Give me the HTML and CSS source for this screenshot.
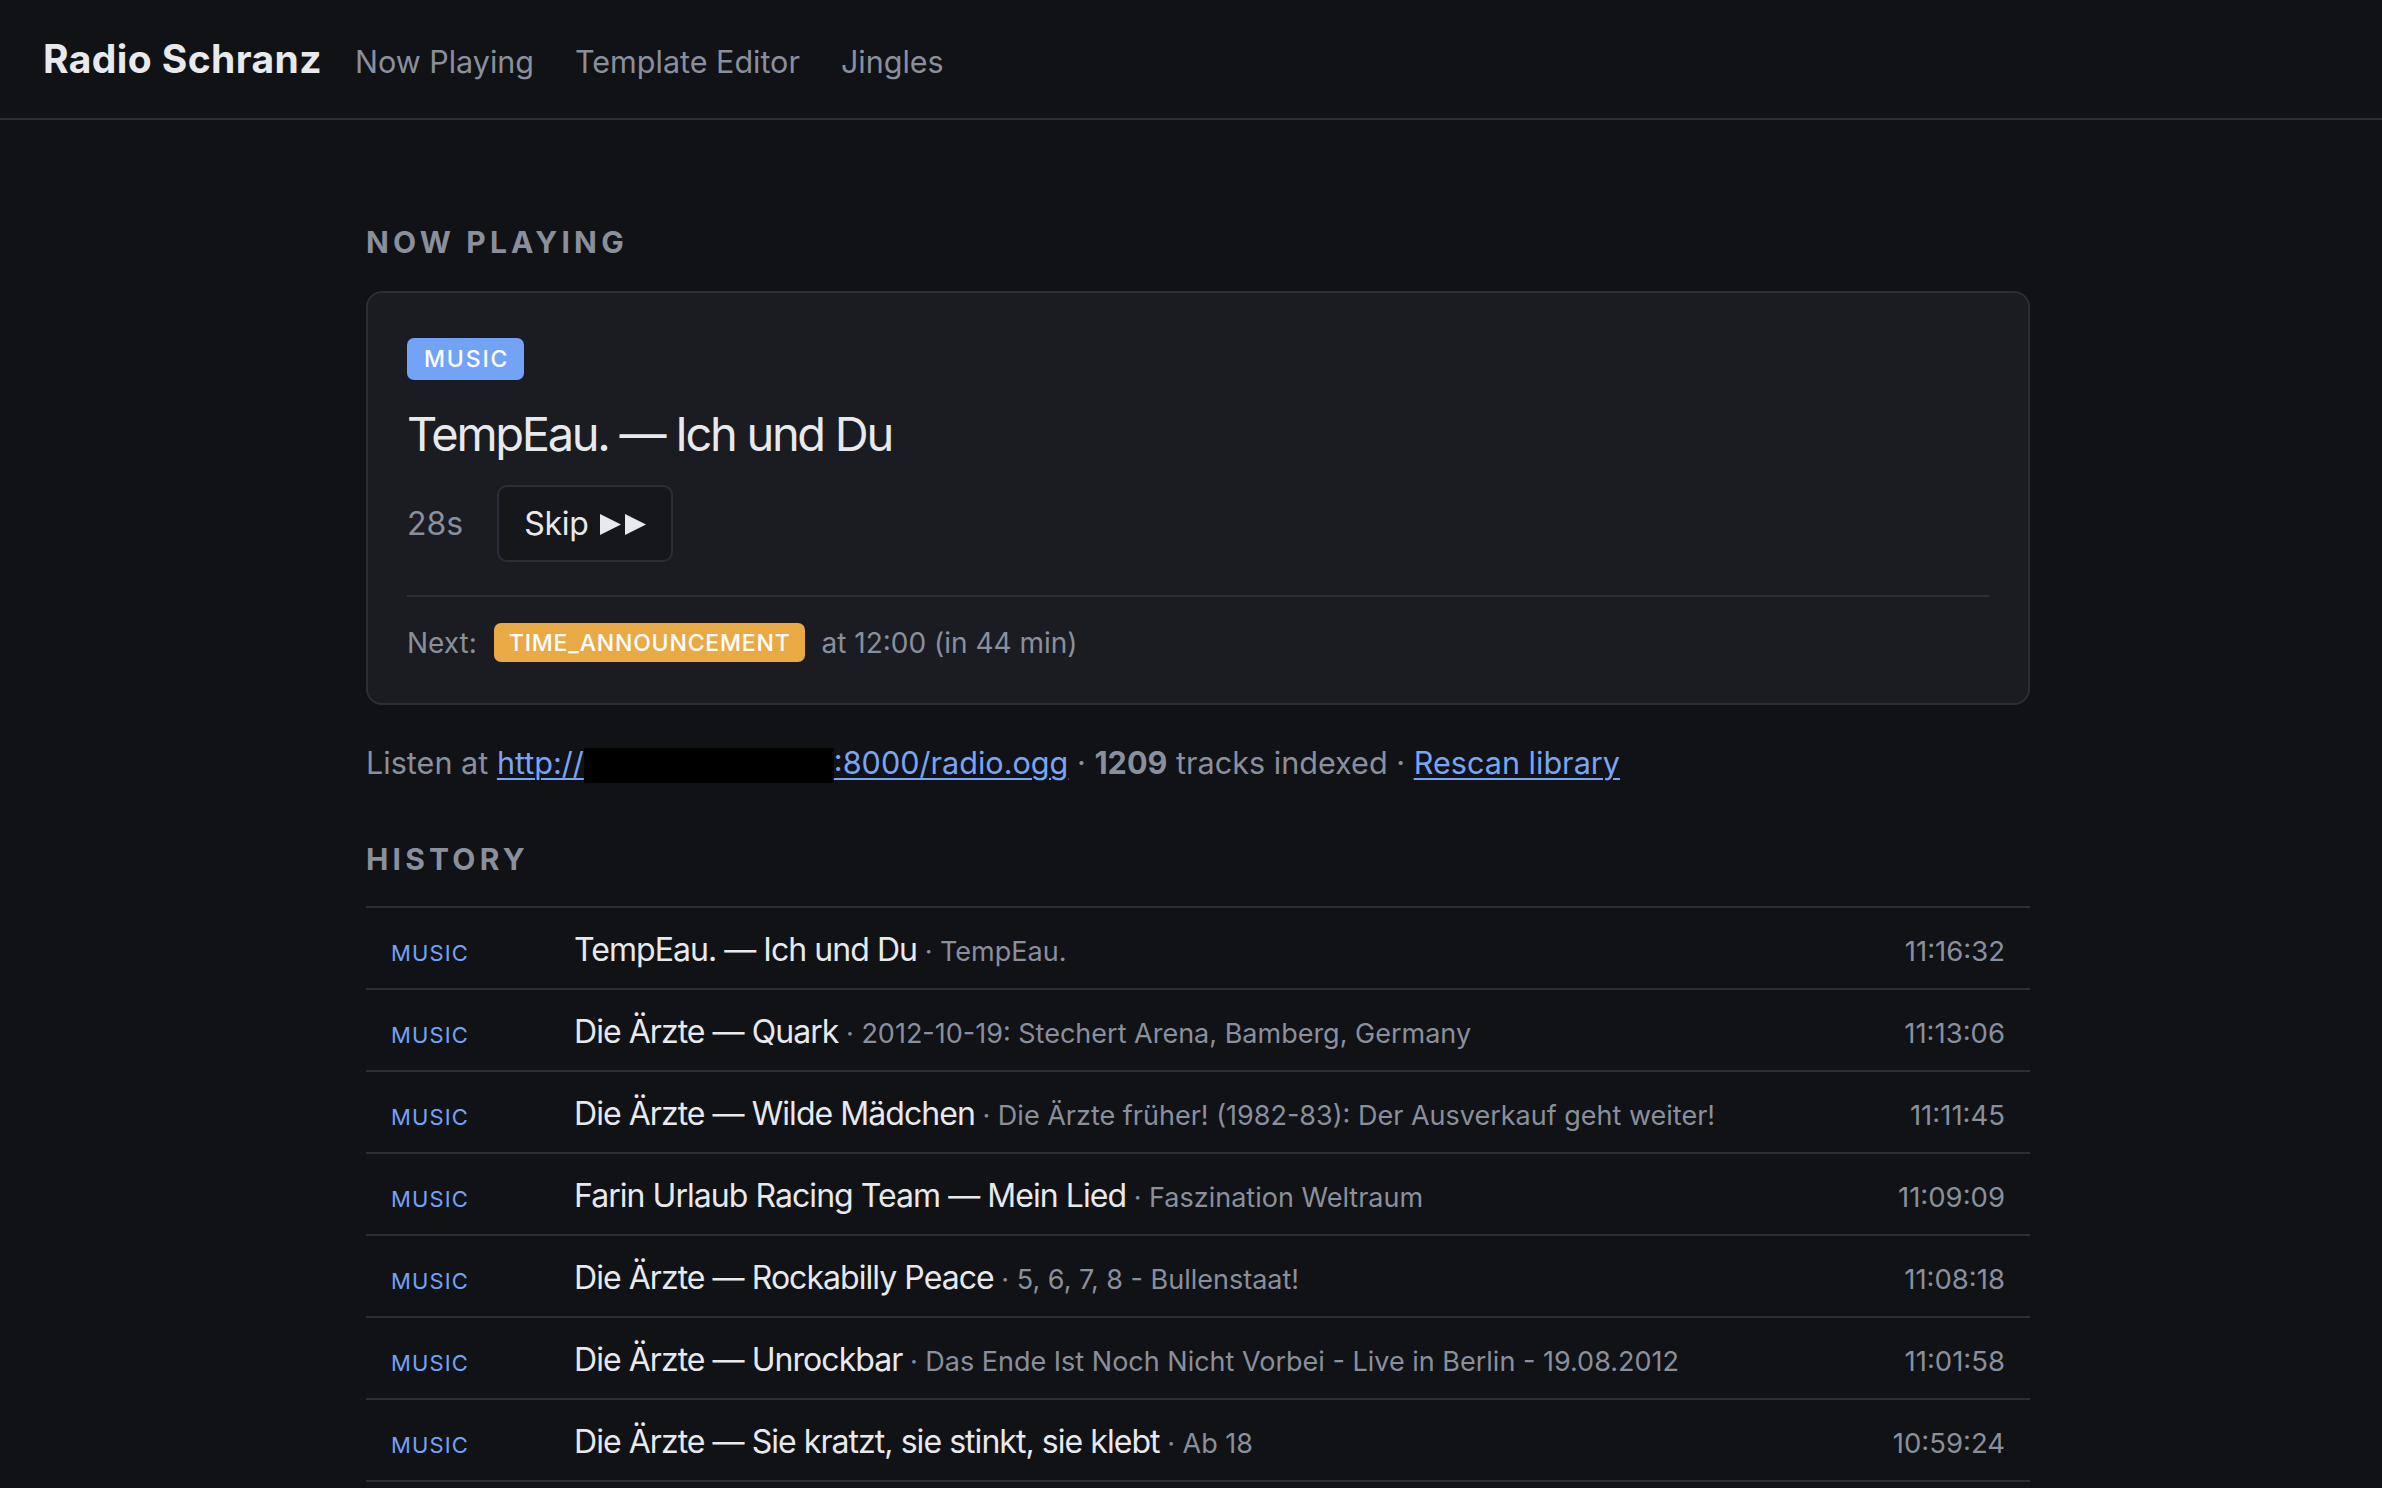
FILE: index.html
```html
<!DOCTYPE html>
<html lang="de">
<head>
    <meta charset="UTF-8">
    <meta name="viewport" content="width=device-width, initial-scale=1.0">
    <title>Radio Schranz</title>
    <link rel="stylesheet" href="styles.css">
</head>
<body>
    <header class="topbar">
        <a class="brand" href="#">Radio Schranz</a>
        <nav class="nav">
            <a href="#">Now Playing</a>
            <a href="#">Template Editor</a>
            <a href="#">Jingles</a>
        </nav>
    </header>

    <main class="page">
        <div class="container">
            <h2 class="section-title">Now Playing</h2>

            <div class="card">
                <span class="badge badge-music">Music</span>
                <div class="track-title">TempEau. — Ich und Du</div>
                <div class="controls">
                    <span class="remaining">28s</span>
                    <button class="skip">Skip
                        <svg class="skip-icon" width="46" height="21" viewBox="0 0 46 21">
                            <path d="M0 0 L21 10.5 L0 21 Z"/>
                            <path d="M25 0 L46 10.5 L25 21 Z"/>
                        </svg>
                    </button>
                </div>
                <div class="next">
                    <span>Next:</span>
                    <span class="badge badge-time">TIME_ANNOUNCEMENT</span>
                    <span>at 12:00 (in 44 min)</span>
                </div>
            </div>

            <p class="stream-info">
                Listen at <a href="#">http://<span class="redacted"></span>:8000/radio.ogg</a>
                · <strong>1209</strong> tracks indexed · <a href="#">Rescan library</a>
            </p>

            <h2 class="section-title">History</h2>

            <div class="history">
                <div class="history-row">
                    <span class="kind">Music</span>
                    <span class="entry"><span class="song">TempEau. — Ich und Du</span><span class="album"> · TempEau.</span></span>
                    <span class="time">11:16:32</span>
                </div>
                <div class="history-row">
                    <span class="kind">Music</span>
                    <span class="entry"><span class="song">Die Ärzte — Quark</span><span class="album"> · 2012-10-19: Stechert Arena, Bamberg, Germany</span></span>
                    <span class="time">11:13:06</span>
                </div>
                <div class="history-row">
                    <span class="kind">Music</span>
                    <span class="entry"><span class="song">Die Ärzte — Wilde Mädchen</span><span class="album"> · Die Ärzte früher! (1982-83): Der Ausverkauf geht weiter!</span></span>
                    <span class="time">11:11:45</span>
                </div>
                <div class="history-row">
                    <span class="kind">Music</span>
                    <span class="entry"><span class="song">Farin Urlaub Racing Team — Mein Lied</span><span class="album"> · Faszination Weltraum</span></span>
                    <span class="time">11:09:09</span>
                </div>
                <div class="history-row">
                    <span class="kind">Music</span>
                    <span class="entry"><span class="song">Die Ärzte — Rockabilly Peace</span><span class="album"> · 5, 6, 7, 8 - Bullenstaat!</span></span>
                    <span class="time">11:08:18</span>
                </div>
                <div class="history-row">
                    <span class="kind">Music</span>
                    <span class="entry"><span class="song">Die Ärzte — Unrockbar</span><span class="album"> · Das Ende Ist Noch Nicht Vorbei - Live in Berlin - 19.08.2012</span></span>
                    <span class="time">11:01:58</span>
                </div>
                <div class="history-row">
                    <span class="kind">Music</span>
                    <span class="entry"><span class="song">Die Ärzte — Sie kratzt, sie stinkt, sie klebt</span><span class="album"> · Ab 18</span></span>
                    <span class="time">10:59:24</span>
                </div>
            </div>
        </div>
    </main>
</body>
</html>
```

FILE: styles.css
```css
:root {
    --bg: #111216;
    --surface: #1b1c21;
    --border: #2b2e36;
    --text: #e8e9ed;
    --muted: #8a8f9c;
    --link: #78a5f6;
    --blue: #72a3f7;
    --orange: #e9aa46;
}

* {
    box-sizing: border-box;
}

body {
    font-family: Inter, 'Noto Sans', sans-serif;
    color: var(--text);
    background-color: var(--bg);
    margin: 0;
}

a {
    color: inherit;
    text-decoration: none;
}

/* top navigation */
.topbar {
    display: flex;
    align-items: baseline;
    gap: 33px;
    height: 120px;
    padding: 36px 43px 0;
    border-bottom: 2px solid var(--border);
}

.brand {
    font-size: 39px;
    line-height: 46px;
    font-weight: 700;
    letter-spacing: 0.4px;
    color: var(--text);
}

.nav {
    display: flex;
    gap: 41px;
}

.nav a {
    font-size: 30.5px;
    line-height: 46px;
    color: var(--muted);
}

.page {
    padding: 105px 0 60px 14px;
}

.container {
    max-width: 1664px;
    margin: 0 auto;
}

.section-title {
    font-size: 30px;
    line-height: 35px;
    font-weight: 700;
    letter-spacing: 0.14em;
    text-transform: uppercase;
    color: var(--muted);
    margin: 0 0 31px;
}

.stream-info + .section-title {
    margin-bottom: 29px;
}

/* now playing card */
.card {
    display: flex;
    flex-direction: column;
    align-items: flex-start;
    background: var(--surface);
    border: 2px solid var(--border);
    border-radius: 16px;
    padding: 45px 39px 41px;
}

.badge {
    display: inline-flex;
    align-items: center;
    color: #fff;
    font-weight: 500;
    text-transform: uppercase;
    border-radius: 7px;
}

.badge-music {
    height: 42px;
    padding: 0 15px 0 17px;
    font-size: 23px;
    letter-spacing: 0.08em;
    background: var(--blue);
}

.badge-time {
    height: 39px;
    padding: 0 14px 0 15px;
    font-size: 23px;
    letter-spacing: 0.035em;
    background: var(--orange);
}

.track-title {
    font-size: 47px;
    line-height: 58px;
    letter-spacing: -2.3px;
    margin-top: 25px;
}

.controls {
    display: flex;
    align-items: center;
    gap: 34px;
    margin-top: 22px;
}

.remaining {
    font-size: 32px;
    color: var(--muted);
}

.skip {
    display: inline-flex;
    align-items: center;
    height: 77px;
    padding: 0 25px;
    font-family: inherit;
    font-size: 32px;
    letter-spacing: -0.3px;
    color: var(--text);
    background: #16171b;
    border: 2px solid var(--border);
    border-radius: 10px;
    cursor: pointer;
}

.skip-icon {
    fill: var(--text);
    margin-left: 12px;
    margin-top: 2px;
}

.next {
    display: flex;
    align-items: center;
    gap: 17px;
    align-self: stretch;
    margin-top: 33px;
    padding-top: 26px;
    border-top: 2px solid var(--border);
    font-size: 28px;
    color: var(--muted);
}

/* stream line */
.stream-info {
    font-size: 30.6px;
    line-height: 45px;
    color: var(--muted);
    margin: 35px 0 57px;
}

.stream-info a {
    color: var(--link);
    text-decoration: underline;
    text-decoration-thickness: 2px;
    text-underline-offset: 4px;
}

.stream-info strong {
    font-weight: 700;
}

.redacted {
    display: inline-block;
    width: 250px;
    height: 35px;
    background: #000;
    vertical-align: -9px;
}

/* history list */
.history {
    border-top: 2px solid var(--border);
}

.history-row {
    display: flex;
    align-items: baseline;
    height: 82px;
    padding: 22px 25px 0;
    line-height: 40px;
    border-bottom: 2px solid var(--border);
}

.kind {
    width: 183px;
    flex-shrink: 0;
    font-size: 22px;
    letter-spacing: 0.05em;
    text-transform: uppercase;
    color: var(--blue);
}

.entry {
    flex: 1;
    white-space: nowrap;
}

.song {
    font-size: 32px;
    letter-spacing: -0.95px;
    color: var(--text);
}

.album {
    font-size: 27px;
    color: var(--muted);
}

.time {
    font-size: 27.5px;
    color: var(--muted);
}
```
